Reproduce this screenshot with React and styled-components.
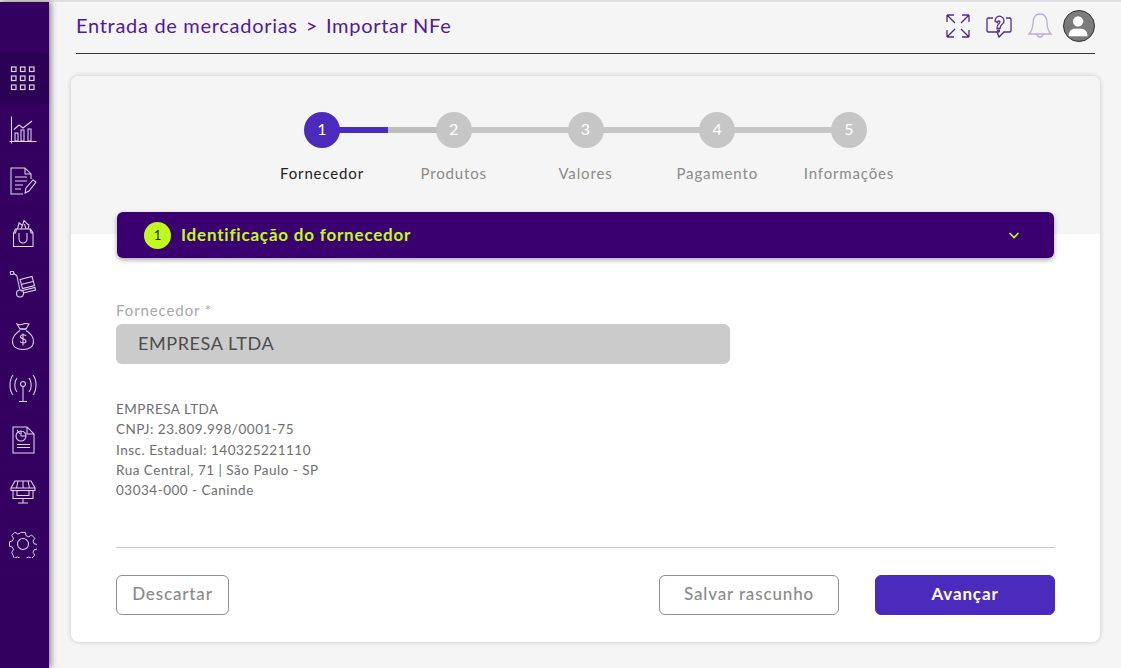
import styled, { createGlobalStyle } from 'styled-components';

const GlobalStyle = createGlobalStyle`
  * {
    box-sizing: border-box;
  }
  html,
  body {
    margin: 0;
    height: 100%;
    overflow: hidden;
    font-family: 'Lato', 'Open Sans', sans-serif;
  }
`;

const Page = styled.div`
  display: flex;
  height: 668px;
  background-color: #f5f5f5;
  border-top: 2px solid #e0e0e0;
`;

const Sidebar = styled.nav`
  flex: 0 0 49px;
  padding-top: 50.5px;
  background-color: #330060;
  box-shadow: 2px 0 6px rgba(0, 0, 0, 0.45);
  z-index: 1;
`;

const NavItem = styled.div`
  height: 51.75px;
  display: flex;
  align-items: center;
  justify-content: center;
  padding-right: 4px;
  color: #e0d6ea;
  background-color: ${(p) => (p.$active ? '#2c0055' : 'transparent')};
  border-bottom: 1px solid #2e0058;

  svg {
    width: 28px;
    height: 28px;
    fill: none;
    stroke: currentColor;
    stroke-width: 1.05;
  }
`;

const Main = styled.main`
  flex: 1;
  padding: 0 21px 0 22px;
`;

const Header = styled.header`
  height: 52px;
  margin: 0 5px;
  padding-bottom: 4px;
  display: flex;
  align-items: center;
  justify-content: space-between;
  border-bottom: 1px solid #333;
`;

const Breadcrumb = styled.div`
  display: flex;
  gap: 8px;
  margin-bottom: 2px;
  font-size: 20px;
  letter-spacing: 0.7px;
  color: #4f1a9c;
`;

const HeaderIcons = styled.div`
  display: flex;
  align-items: center;
  gap: 13px;

  svg {
    width: 28px;
    height: 28px;
    fill: none;
    stroke: #4f2a96;
    stroke-width: 1.3;
  }
`;

const BellIcon = styled.svg`
  opacity: 0.35;
`;

const Avatar = styled.div`
  width: 32px;
  height: 32px;
  margin-left: -4px;
  border-radius: 50%;
  border: 1.5px solid #333;
  overflow: hidden;
  background-color: #7b7b7b;

  svg {
    display: block;
    width: 100%;
    height: 100%;
    stroke: none;
    fill: #fff;
  }
`;

const Card = styled.section`
  margin-top: 22px;
  height: 566px;
  border-radius: 8px;
  overflow: hidden;
  background-color: #fff;
  box-shadow: 0 0 5px rgba(0, 0, 0, 0.2);
  display: flex;
  flex-direction: column;
`;

const CardTop = styled.div`
  height: 158px;
  padding-top: 36px;
  background-color: #f5f5f5;
`;

const Stepper = styled.ol`
  display: flex;
  justify-content: center;
  margin: 0;
  padding: 0;
  list-style: none;
`;

const Step = styled.li`
  position: relative;
  width: 131.75px;
  display: flex;
  flex-direction: column;
  align-items: center;
  gap: 15px;

  &:not(:last-child)::after {
    content: '';
    position: absolute;
    top: 15px;
    left: 50%;
    width: 100%;
    height: 6px;
    background: ${(p) => (p.$active ? 'linear-gradient(to right, #4a2bbd 50%, #bdbdbd 50%)' : '#c6c6c6')};
  }
`;

const StepCircle = styled.span`
  z-index: 1;
  width: 36px;
  height: 36px;
  padding-bottom: 3px;
  display: flex;
  align-items: center;
  justify-content: center;
  border-radius: 50%;
  font-size: 16px;
  color: #fff;
  background-color: ${(p) => (p.$active ? '#4a2bbd' : '#c6c6c6')};
`;

const StepLabel = styled.span`
  font-size: 15px;
  line-height: 20px;
  letter-spacing: 0.85px;
  white-space: nowrap;
  color: ${(p) => (p.$active ? '#222' : '#8a8a8a')};
`;

const CardBody = styled.div`
  flex: 1;
  padding: 0 45px;
  display: flex;
  flex-direction: column;
`;

const Accordion = styled.div`
  height: 46px;
  margin: -22px 1px 0;
  padding: 0 32px 0 27px;
  display: flex;
  align-items: center;
  gap: 10px;
  border-radius: 6px;
  background-color: #3a006f;
  box-shadow: 0 2px 5px rgba(0, 0, 0, 0.35);
  z-index: 1;

  svg {
    margin-left: auto;
    width: 16px;
    height: 16px;
    fill: none;
    stroke: #c0fb1e;
    stroke-width: 1.6;
  }
`;

const AccordionBadge = styled.span`
  width: 27px;
  height: 27px;
  display: flex;
  align-items: center;
  justify-content: center;
  border-radius: 50%;
  font-size: 13px;
  color: #222;
  background-color: #c0fb1e;
`;

const AccordionTitle = styled.span`
  margin-bottom: 2px;
  font-size: 17px;
  font-weight: 700;
  letter-spacing: 0.8px;
  color: #c0fb1e;
`;

const FieldLabel = styled.label`
  margin-top: 42px;
  font-size: 15px;
  line-height: 20px;
  letter-spacing: 0.9px;
  color: #a8a8a8;
`;

const ReadonlyInput = styled.div`
  width: 614px;
  height: 40px;
  margin-top: 4px;
  padding: 0 0 2px 22px;
  display: flex;
  align-items: center;
  border-radius: 6px;
  font-size: 18px;
  letter-spacing: 0.6px;
  color: #4d4d4d;
  background-color: #cbcbcb;
`;

const SupplierInfo = styled.address`
  margin-top: 35px;
  font-style: normal;
  font-size: 13.5px;
  line-height: 20.25px;
  letter-spacing: 0.5px;
  color: #6e6e6e;
`;

const Divider = styled.hr`
  width: 100%;
  margin: 47px 0 0;
  border: 0;
  border-top: 1px solid #c8c8c8;
`;

const Actions = styled.div`
  margin-top: 27px;
  display: flex;
  gap: 36px;
`;

const Button = styled.button`
  width: ${(p) => p.$width}px;
  height: 40px;
  padding: 0 0 3px;
  margin-right: ${(p) => (p.$pushRight ? 'auto' : 0)};
  border-radius: 6px;
  border: 1px solid ${(p) => (p.$primary ? '#4a2bbd' : '#8f8f8f')};
  font-family: inherit;
  font-size: 17px;
  font-weight: ${(p) => (p.$primary ? 700 : 500)};
  letter-spacing: 0.85px;
  color: ${(p) => (p.$primary ? '#fff' : '#8a8a8a')};
  background-color: ${(p) => (p.$primary ? '#4a2bbd' : '#fff')};
`;

const navIcons = [
  <>
    {[3, 12, 21].map((y) =>
      [2.5, 11.5, 20.5].map((x) => <rect key={`${x}-${y}`} x={x} y={y} width="4.5" height="4.5" strokeWidth="1.2" />),
    )}
  </>,
  <>
    <path d="M2.5 0.5v27M0.5 25.5H27.5" />
    <path d="M5 13.5 10 9l4 3 9-7" />
    <rect x="6" y="17" width="3" height="8" />
    <rect x="12" y="14" width="3" height="11" />
    <rect x="19" y="13" width="3" height="12" />
  </>,
  <>
    <path d="M16 1H2v26h12M16 1l6 6v5M16 1v6h6" />
    <path d="M6 10h12M6 14h12M6 18h8M6 22h6" />
    <path d="M16 26l1-5 7-8 3 2-7 9z" />
  </>,
  <>
    <path d="M6.5 10h15L24 14v13.5H4.5V14z" />
    <path d="M4.500 14h2l1-4M24 14h-2l-1-4" />
    <path d="M10 14v6a4 4 0 0 0 8 0v-6" />
    <path d="M8.500 10l1.500-6 3.500 2.500L15 1.500l3.500 3.500 1.500 1-1 4" />
    <path d="M13.500 6.500L12 10M15.500 5L17 10" />
  </>,
  <>
    <circle cx="3" cy="2" r="1.800" />
    <path d="M4.800 2.500l3 2 3 14" />
    <circle cx="11" cy="22.500" r="3.500" />
    <path d="M14.500 22l12-3-.5-2.500-14.500 3.500" />
    <path d="M11 8.500l12-3 2.500 9-12 3z" />
    <path d="M12 13.500l12-3" />
  </>,
  <>
    <path d="M8 1c2 1 4 1 6 0s4-.5 6 0l-3 5h-6z" />
    <path d="M10.500 6h7" />
    <path d="M11 7.500C6 10.500 3.500 14.500 3.500 18.500c0 5 4 8 10.500 8s10.500-3 10.500-8c0-4-2.500-8-7.500-11" />
    <path d="M17 13c-1-1.500-5-1.800-5.500.5s5.500 2 5.500 4.500-4.500 2.500-6 .5M14 10.500v12" />
  </>,
  <>
    <circle cx="14" cy="10" r="2.500" />
    <path d="M14 12.500V27M10 27.500h8" />
    <path d="M8 4c-3 4-3 10 0 14M20 4c3 4 3 10 0 14" />
    <path d="M4 1C0 6 0 16 4 21M24 1c4 5 4 15 0 20" />
  </>,
  <>
    <path d="M18 1H4v26h21V8zM18 1v7h7" />
    <circle cx="12" cy="10" r="5" />
    <path d="M12 5v5h5M8 4l3 4" />
    <path d="M8 18.500h13M8 21.500h13" />
  </>,
  <>
    <path d="M6 3h16l4 7v2.500H2V10z" />
    <path d="M2 10h24M9 3l-1.500 7M14 3v7M19 3l1.500 7" />
    <path d="M4 12.500v8h20v-8" />
    <rect x="8" y="12.500" width="12" height="5" />
    <path d="M14 20.500v4M9 25h10" />
  </>,
  <>
    <path d="M11.500 1.500h5l.7 3.500 3 1.300 3-2 3.500 3.500-2 3 1.300 3 3.500.7v5l-3.500.7-1.300 2.800 2 3-3.500 3.500-3-1.500-2.700 1-1 3.500h-5l-1-3.500-2.700-1-3 1.500L1.800 23l2-3-1.300-2.800L-.5 16.500v-5l3-.7 1.300-3-2-3L5.300 1.300l3 2 2.500-1z" strokeLinejoin="round" transform="translate(1 1) scale(.93)" />
    <circle cx="14" cy="14" r="5.500" />
  </>,
];

const steps = ['Fornecedor', 'Produtos', 'Valores', 'Pagamento', 'Informações'];

const App = () => {
  return (
    <Page>
      <GlobalStyle />
      <Sidebar>
        {navIcons.map((icon, index) => (
          <NavItem key={index} $active={index === 0}>
            <svg viewBox="0 0 28 28">{icon}</svg>
          </NavItem>
        ))}
      </Sidebar>
      <Main>
        <Header>
          <Breadcrumb>
            <span>Entrada de mercadorias</span>
            <span>&gt;</span>
            <span>Importar NFe</span>
          </Breadcrumb>
          <HeaderIcons>
            <svg viewBox="0 0 28 28">
              <path d="M3 3l8 8M3 3v7M3 3h7M25 3l-8 8M25 3v7M25 3h-7M3 25l8-8M3 25v-7M3 25h7M25 25l-8-8M25 25v-7M25 25h-7" />
            </svg>
            <svg viewBox="0 0 28 28">
              <path d="M8 6H3L2 7v12l1 1h9l2 5 5-5h6l1-1V7l-1-1h-4" />
              <path d="M10 9a4.500 4.500 0 1 1 7 3.500c-2 1.500-2 2-2 4h-3c0-3 .5-4 2.500-5.500 1-1 0-2.500-1-2-.5 0-1 .5-1 1.500z" />
              <circle cx="13.500" cy="19" r="1" />
            </svg>
            <BellIcon viewBox="0 0 28 28">
              <path d="M14 2c-5 0-7 4-7 9 0 5-1 8-4 11h22c-3-3-4-6-4-11 0-5-2-9-7-9z" />
              <path d="M11 22a3 3 0 0 0 6 0" />
            </BellIcon>
            <Avatar>
              <svg viewBox="0 0 32 32">
                <circle cx="15" cy="11" r="5.500" />
                <path d="M5 27c0-6 3-8 7-8h6c4 0 7 2 7 8z" />
              </svg>
            </Avatar>
          </HeaderIcons>
        </Header>
        <Card>
          <CardTop>
            <Stepper>
              {steps.map((label, index) => (
                <Step key={label} $active={index === 0}>
                  <StepCircle $active={index === 0}>{index + 1}</StepCircle>
                  <StepLabel $active={index === 0}>{label}</StepLabel>
                </Step>
              ))}
            </Stepper>
          </CardTop>
          <CardBody>
            <Accordion>
              <AccordionBadge>1</AccordionBadge>
              <AccordionTitle>Identificação do fornecedor</AccordionTitle>
              <svg viewBox="0 0 16 16">
                <path d="M3.500 6l4.500 4.500L12.500 6" />
              </svg>
            </Accordion>
            <FieldLabel>Fornecedor *</FieldLabel>
            <ReadonlyInput>EMPRESA LTDA</ReadonlyInput>
            <SupplierInfo>
              EMPRESA LTDA
              <br />
              CNPJ: 23.809.998/0001-75
              <br />
              Insc. Estadual: 140325221110
              <br />
              Rua Central, 71 | São Paulo - SP
              <br />
              03034-000 - Caninde
            </SupplierInfo>
            <Divider />
            <Actions>
              <Button $width={113} $pushRight>
                Descartar
              </Button>
              <Button $width={180}>Salvar rascunho</Button>
              <Button $width={180} $primary>
                Avançar
              </Button>
            </Actions>
          </CardBody>
        </Card>
      </Main>
    </Page>
  );
};

export default App;
